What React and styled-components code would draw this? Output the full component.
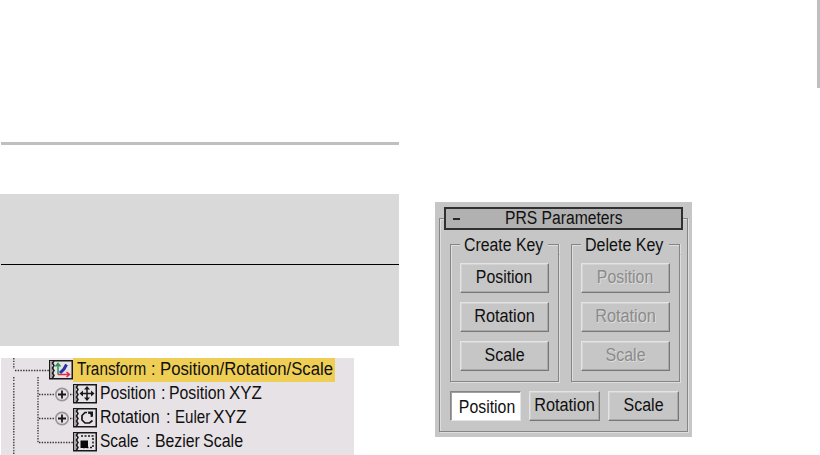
import React from "react";
import styled, { createGlobalStyle } from "styled-components";

const GlobalStyle = createGlobalStyle`
  * { box-sizing: border-box; }
  body { margin: 0; background: #fff; overflow: hidden; }
`;

const Page = styled.main`
  display: grid;
  grid-template-columns: 399px 293px 1fr;
  width: 820px;
  height: 455px;
  font-family: "Liberation Sans", Arial, sans-serif;
  font-size: 18px;
  color: #101010;
`;

const Column = styled.section`
  padding-top: 142px;
`;

const Rule = styled.div`
  height: 3px;
  margin-left: 1px;
  background: #bfbfbf;
`;

const Band = styled.div`
  height: 152px;
  margin-top: 49px;
  padding: 70px 0 0 1px;
  background: #d9d9d9;
`;

const Divider = styled.div`
  height: 1px;
  background: #000;
`;

const Tree = styled.div`
  width: 353px;
  height: 97px;
  margin: 12px 0 0 1px;
  overflow: hidden;
  background: #e7e2e6;
`;

const TreeRow = styled.div`
  display: flex;
  height: 24px;
  svg { display: block; flex: none; }
`;

const TreeLabel = styled.div`
  display: flex;
  width: ${(p) => p.$width}px;
  height: 24px;
  padding-left: ${(p) => p.$inset}px;
  line-height: 22px;
  background: ${(p) => (p.$selected ? "#efce55" : "transparent")};
`;

const Word = styled.div`
  flex: none;
  width: ${(p) => p.$width}px;
  white-space: pre;
`;

const Text = styled.span`
  display: block;
  width: max-content;
  white-space: pre;
  transform: scaleX(${(p) => p.$fit});
  transform-origin: ${(p) => p.$origin || "left"} center;
`;

const PanelColumn = styled.section`
  padding: 202px 0 0 36px;
`;

const Panel = styled.div`
  width: 257px;
  height: 235px;
  padding: 5px 4px 0;
  background: #c6c6c6;
`;

const Header = styled.div`
  display: grid;
  grid-template-columns: 59px 1fr;
  align-items: center;
  position: relative;
  width: 239px;
  height: 23px;
  margin-left: 5px;
  border: 2px solid #303030;
  background: #b1b1b1;
  line-height: 19px;
`;

const Dash = styled.div`
  width: 7px;
  height: 2px;
  margin-left: 7px;
  background: #282828;
`;

const Rollout = styled.div`
  height: 214px;
  width: 249px;
  margin-top: -12px;
  padding: 18px 0 0 10px;
  border: 1px solid #858585;
  box-shadow: inset 1px 1px 0 #dedede, 1px 1px 0 #dedede;
`;

const Groups = styled.div`
  display: flex;
  gap: 12px;
`;

const Group = styled.section`
  width: 109px;
  height: 145px;
`;

const Legend = styled.div`
  display: grid;
  grid-template-columns: 10px minmax(0, 1fr) 11px;
  column-gap: 4px;
  height: 17px;
  line-height: 17px;
  &::before,
  &::after {
    content: "";
    align-self: end;
    height: 9px;
    border-top: 1px solid #858585;
    box-shadow: inset 0 1px 0 #dedede;
  }
  &::before { border-left: 1px solid #858585; box-shadow: inset 1px 1px 0 #dedede; }
  &::after { border-right: 1px solid #858585; box-shadow: inset 0 1px 0 #dedede, 1px 0 0 #dedede; }
`;

const GroupBody = styled.div`
  display: flex;
  flex-direction: column;
  gap: 9px;
  height: 128px;
  padding: 9px 9px 0;
  border: 1px solid #858585;
  border-top: 0;
  box-shadow: inset 1px 0 0 #dedede, 1px 1px 0 #dedede;
`;

const Button = styled.button`
  display: flex;
  justify-content: center;
  flex: none;
  width: ${(p) => p.$width || 89}px;
  height: 30px;
  padding: ${(p) => (p.$active ? "2px 0 0 4px" : "0")};
  border: 1px solid;
  border-color: ${(p) => (p.$active ? "#858585 #e4e4e4 #e4e4e4 #858585" : "#e4e4e4 #777 #777 #e4e4e4")};
  box-shadow: ${(p) => (p.$active ? "inset 1px 1px #a0a0a0" : "inset -1px -1px #aaa, inset 1px 1px #d3d3d3")};
  background: ${(p) => (p.$active ? "#fff" : "#c6c6c6")};
  color: ${(p) => (p.disabled ? "#8b8b8b" : "#101010")};
  text-shadow: ${(p) => (p.disabled ? "1px 1px #dedede" : "none")};
  font: inherit;
  line-height: 27px;
`;

const Modes = styled.div`
  display: flex;
  gap: 8px;
  padding-top: 9px;
`;

const EdgeColumn = styled.aside`
  display: flex;
  justify-content: flex-end;
`;

const EdgeBar = styled.div`
  width: 3px;
  height: 88px;
  background: #bfbfbf;
`;

const glyphs = {
  transform: (
    <>
      <path d="m11 13 4-4 2.5-4.5" stroke="#2433a8" strokeWidth="3" />
      <path d="M9 14.5V4M6.5 6.5 9 3.5l2.5 3" stroke="#219653" />
      <path d="M9 14.5h11M17.5 12l3 2.5-3 2.5" stroke="#e52b43" />
    </>
  ),
  move: (
    <>
      <path d="M14 4v11M8.5 9.5h11" stroke="#181818" />
      <path d="m14 2 3 3.5h-6zm0 15 3-3.5h-6zM6.5 9.5l3.5-3v6zm15 0-3.5-3v6z" fill="#181818" stroke="none" />
    </>
  ),
  rotate: (
    <>
      <path d="M14 4.5h-2L9 7.5V12l3 3h4.5l3-2.5" stroke="#181818" strokeWidth="1.7" />
      <path d="M15 5h3.5v4" stroke="#181818" strokeWidth="1.7" />
      <path d="M14.5 3.5H20V9z" fill="#181818" stroke="none" />
    </>
  ),
  scale: (
    <>
      <path d="M8 4h12v11.5H9" stroke="#181818" strokeDasharray="2 1.5" />
      <path d="M7.5 8.5h7.5V16H7.5z" fill="#080808" stroke="none" />
    </>
  ),
};

function ControllerIcon({ kind }) {
  return (
    <svg width="24" height="24" viewBox="0 0 24 24" fill="none" strokeWidth="1.5">
      <g transform="translate(0 2)">
        <path d="M.75.75h22.5v18H.75z" fill="#e7e2e6" stroke="#181818" />
        <path d="M1 1h3v3L2.5 6 4 8v2l-1.5 2L4 14v4H1z" fill="#aaa6a9" stroke="none" />
        <path d="M5 1 3.5 3 5 5.5 3.5 8 5 10.5 3.5 13 5 15.5 3.5 18" stroke="#181818" />
        {glyphs[kind]}
      </g>
    </svg>
  );
}

function Branch({ root, last }) {
  return (
    <svg width={root ? 48 : 72} height="24" fill="none" stroke="#343234" strokeWidth="1.3">
      <path d={root ? "M12.8 0v11M12.8 19v5" : "M12.8 1v23"} strokeDasharray="1.4 1.3" />
      {root ? (
        <path d="M14 12.5h34M37 19v5" strokeDasharray="1.4 1.3" />
      ) : (
        <path d={last ? "M37 0v12.5h35" : "M37 0v24M38 12.5h15M69 12.5h3"} strokeDasharray="1.4 1.3" />
      )}
      {!root && !last && (
        <>
          <circle cx="61" cy="12.5" r="6.2" stroke="#999599" strokeWidth="1.7" />
          <path d="M57 12.5h8M61 8.5v8" stroke="#181818" strokeWidth="1.8" />
        </>
      )}
    </svg>
  );
}

const rows = [
  {
    kind: "transform",
    root: true,
    words: [["Transform ", 0.85, 74], [": ", 0.9, 9], ["Position/Rotation/Scale", 0.93, 174]],
  },
  {
    kind: "move",
    words: [["Position ", 0.87, 60.5], [": ", 0.9, 8.5], ["Position ", 0.88, 59.5], ["XYZ", 0.94, 40]],
  },
  {
    kind: "rotate",
    words: [["Rotation ", 0.89, 65.5], [": ", 0.9, 9], ["Euler ", 0.84, 38], ["XYZ", 0.96, 40]],
  },
  {
    kind: "scale",
    last: true,
    words: [["Scale ", 0.86, 45.5], [": ", 0.9, 9], ["Bezier ", 0.88, 48.5], ["Scale", 0.89, 50]],
  },
];

const actions = [
  { text: "Position", fit: 0.88, width: 71 },
  { text: "Rotation", fit: 0.905, width: 71 },
  { text: "Scale", fit: 0.89, width: 71 },
];

function KeyGroup({ title, fit, disabled }) {
  return (
    <Group>
      <Legend>
        <Text $fit={fit}>{title}</Text>
      </Legend>
      <GroupBody>
        {actions.map((a) => (
          <Button key={a.text} disabled={disabled}>
            <Text $fit={a.fit} $origin="center">{a.text}</Text>
          </Button>
        ))}
      </GroupBody>
    </Group>
  );
}

export default function App() {
  return (
    <>
      <GlobalStyle />
      <Page>
        <Column>
          <Rule />
          <Band>
            <Divider />
          </Band>
          <Tree>
            {rows.map((r) => (
              <TreeRow key={r.kind}>
                <Branch root={r.root} last={r.last} />
                <ControllerIcon kind={r.kind} />
                <TreeLabel $selected={r.root} $width={r.root ? 262 : 220} $inset={r.root ? 4 : 3}>
                  {r.words.map(([text, fit, width], i) => (
                    <Word key={i} $width={width}>
                      <Text $fit={fit}>{text}</Text>
                    </Word>
                  ))}
                </TreeLabel>
              </TreeRow>
            ))}
          </Tree>
        </Column>
        <PanelColumn>
          <Panel>
            <Header>
              <Dash />
              <Text $fit={0.87}>PRS Parameters</Text>
            </Header>
            <Rollout>
              <Groups>
                <KeyGroup title="Create Key" fit={0.88} />
                <KeyGroup title="Delete Key" fit={0.89} disabled />
              </Groups>
              <Modes>
                {actions.map((a, i) => (
                  <Button key={a.text} $width={a.width} $active={i === 0}>
                    <Text $fit={a.fit} $origin="center">{a.text}</Text>
                  </Button>
                ))}
              </Modes>
            </Rollout>
          </Panel>
        </PanelColumn>
        <EdgeColumn>
          <EdgeBar />
        </EdgeColumn>
      </Page>
    </>
  );
}
